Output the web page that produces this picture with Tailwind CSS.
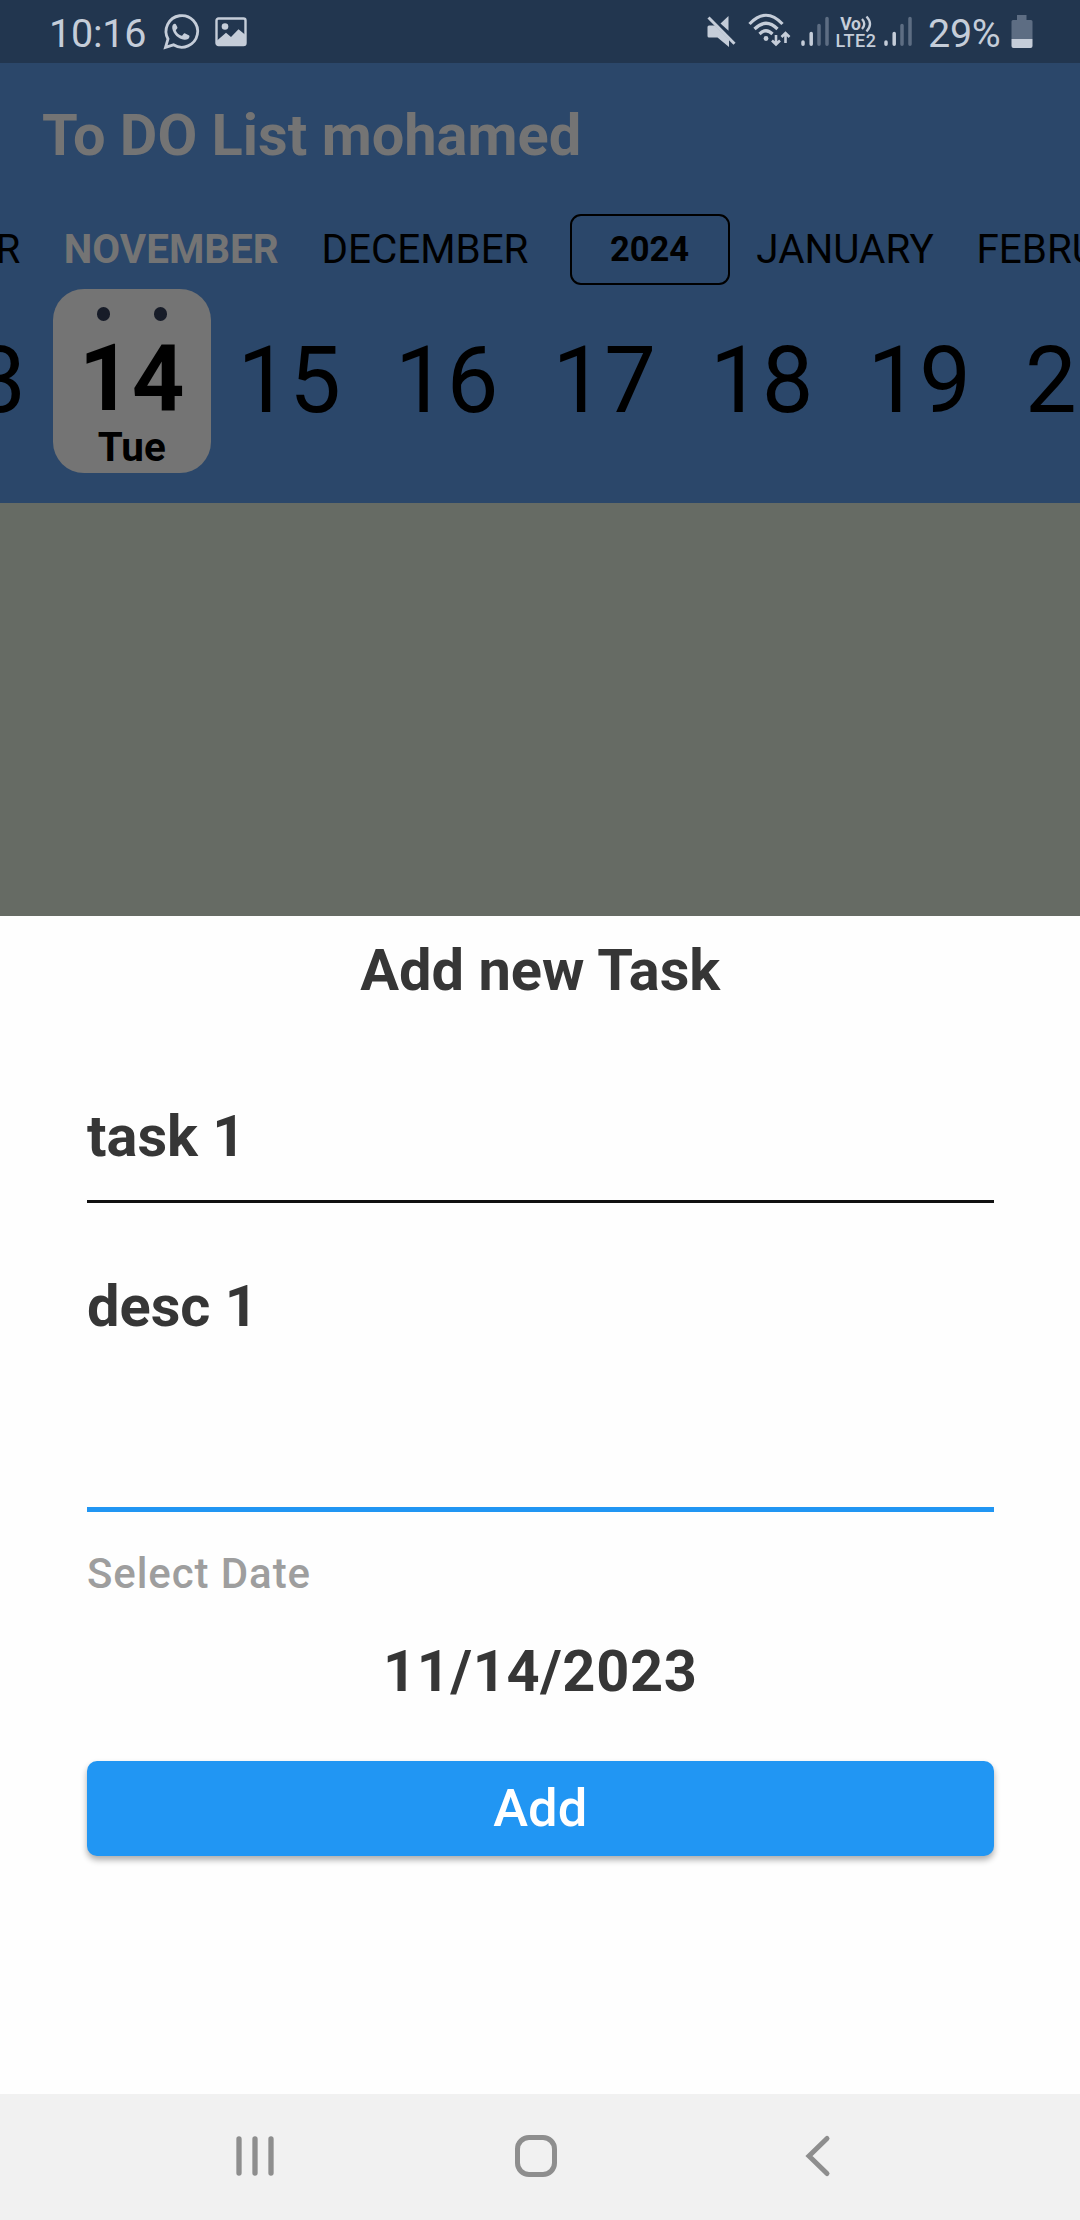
<!DOCTYPE html>
<html lang="en">
<head>
<meta charset="utf-8">
<title>To DO List</title>
<script src="https://cdn.jsdelivr.net/npm/@tailwindcss/browser@4"></script>
</head>
<body class="w-[1080px] h-[2220px] overflow-hidden flex flex-col bg-[#fefefe] font-['Roboto',sans-serif] whitespace-nowrap">
  <!-- Status bar -->
  <div class="h-[63px] shrink-0 bg-[#22364f] text-[#c5cdd9] flex items-start">
    <span class="ml-[49px] mt-[14px] w-[98px] text-[39.5px] leading-[40px] tracking-[-0.2px]">10:16</span>
    <svg class="ml-[14px] mt-[12px] w-[40px] h-[40px] shrink-0" viewBox="0 0 40 40" fill="none">
      <path d="M4.5 35.3 L7 27 A15.8 15.8 0 1 1 12.5 32.8 Z" stroke="#c5cdd9" stroke-width="2.8" stroke-linejoin="miter"/>
      <path d="M13.5 11.8 c-1.6 .3 -2.6 2.4 -2.2 4.8 c1 5.700 6 10.500 12 11.200 c2.500 .3 5 -.9 5.200 -3.200 c.1 -1 -.5 -1.300 -1.300 -1.700 l-3 -1.400 c-.8 -.3 -1.200 -.1 -1.700 .5 l-1.200 1.400 c-.4 .4 -.8 .4 -1.300 .2 c-2.300 -1 -4 -2.700 -5 -4.600 c-.3 -.5 -.2 -.8 .1 -1.200 l1.100 -1.400 c.3 -.4 .3 -.8 .1 -1.300 l-1.300 -2.700 c-.3 -.6 -.7 -.8 -1.500 -.6 z" fill="#c5cdd9"/>
    </svg>
    <svg class="ml-[14px] mt-[16px] w-[32px] h-[31px] shrink-0" viewBox="0 0 32 31">
      <rect x="1.500" y="2.500" width="29" height="26.500" rx="2" fill="none" stroke="#c5cdd9" stroke-width="2.400"/>
      <circle cx="10" cy="10.500" r="3.300" fill="#c5cdd9"/>
      <path d="M1.500 25 L11 16.700 L16 21 L23.500 13.200 L30.500 19 V28 H1.500 Z" fill="#c5cdd9"/>
    </svg>
    <div class="flex-1"></div>
    <svg class="mt-[14px] w-[32px] h-[36px] shrink-0" viewBox="0 0 32 36" fill="#c5cdd9">
      <path d="M1.500 13 Q1.500 11.500 3 11.500 H9 L23 25.500 V33 L11.500 23.500 H3 Q1.500 23.500 1.500 22 Z"/>
      <path d="M14.500 9.500 L22.500 2 V16.800 Z"/>
      <path d="M2.500 3.500 L28.500 29.800" stroke="#c5cdd9" stroke-width="3"/>
    </svg>
    <svg class="ml-[8.5px] mt-[13px] w-[44px] h-[36px] shrink-0" viewBox="0 0 44 36" fill="none" stroke="#c5cdd9" stroke-width="3.200">
      <path d="M2.500 11 Q19 -6.500 35.500 11"/><path d="M7.500 16 Q19 4.500 30.500 16"/><path d="M12.500 21 Q19 14.500 25.500 21"/>
      <circle cx="19" cy="25.500" r="2.400" fill="#c5cdd9" stroke="none"/>
      <path d="M29 22 V31 M25 27.500 L29 31.500 L33 27.500 M38.500 30 V20.500 M34.500 24 L38.500 20 L42.500 24" stroke-width="2.600"/>
    </svg>
    <svg class="ml-[9.5px] mt-[15px] w-[30px] h-[32px] shrink-0" viewBox="0 0 30 32" stroke="#c5cdd9" stroke-width="3.500" stroke-linecap="round">
      <path d="M3 27 V29.200 M11.200 18.500 V29.200"/><path d="M19 10.500 V29.200 M27 3.500 V29.200" stroke="#5d6d83"/>
    </svg>
    <div class="ml-[5px] mt-[16px] w-[42px] flex flex-col items-center">
      <div class="flex items-center h-[16px]"><span class="text-[17.5px] leading-[16px] font-bold tracking-[-0.3px]">Vo</span>
        <svg class="w-[11px] h-[18px] shrink-0" viewBox="0 0 11 18" fill="none" stroke="#c5cdd9" stroke-width="2.300"><path d="M1 4 Q5.500 9 1 14 M5.500 1.500 Q12.500 9 5.500 16.500"/></svg>
      </div>
      <span class="text-[18px] leading-[18px] font-medium tracking-[0.5px]">LTE2</span>
    </div>
    <svg class="ml-[6px] mt-[15px] w-[30px] h-[32px] shrink-0" viewBox="0 0 30 32" stroke="#c5cdd9" stroke-width="3.500" stroke-linecap="round">
      <path d="M3 27 V29.200 M11.200 18.500 V29.200"/><path d="M19 10.500 V29.200 M27 3.500 V29.200" stroke="#5d6d83"/>
    </svg>
    <span class="ml-[15px] mt-[14px] w-[74px] text-[39.500px] leading-[40px] tracking-[-0.3px]">29%</span>
    <svg class="ml-[9px] mr-[47px] mt-[14px] w-[22px] h-[35px] shrink-0" viewBox="0 0 22 35">
      <path d="M6 1 H15.500 V6 H20 Q21.500 6 21.500 7.500 V25 H0.500 V7.500 Q0.500 6 2 6 H6 Z" fill="#5d6d83"/>
      <path d="M0.500 25 H21.500 V32 Q21.500 34 19.500 34 H2.500 Q0.500 34 0.500 32 Z" fill="#c5cdd9"/>
    </svg>
  </div>

  <!-- Header with month and day pickers -->
  <div class="h-[440px] shrink-0 overflow-hidden bg-[#2b476a] flex flex-col">
    <div class="h-[151px] pt-[42px] pl-[42px] text-[57.75px] leading-[60px] font-bold text-[#747474]">To DO List mohamed</div>
    <div class="h-[71px] flex items-center text-[40.4px] leading-[46px] text-black">
      <div class="w-[43px] pr-[22.5px] flex justify-end shrink-0">OCTOBER</div>
      <div class="w-[256.5px] text-center shrink-0 font-bold text-[#747474]">NOVEMBER</div>
      <div class="w-[251px] text-center shrink-0">DECEMBER</div>
      <div class="ml-[19px] w-[160px] h-[71px] shrink-0 rounded-[11px] border-[2.6px] border-black flex items-center justify-center pb-[1px] text-[34.5px] font-bold">2024</div>
      <div class="w-[230px] pl-[1px] text-center shrink-0">JANUARY</div>
      <div class="pl-[17px] shrink-0">FEBRUARY</div>
    </div>
    <div class="mt-[4px] ml-[-104.5px] h-[184px] flex text-[92px] leading-[184px] text-black">
      <div class="w-[157.5px] shrink-0 text-center">13</div>
      <div class="w-[157.5px] shrink-0 h-[184px] rounded-[31px] bg-[#747474] flex flex-col items-center font-bold">
        <div class="mt-[18px] flex gap-[43.5px] h-[14px]"><i class="w-[13.5px] h-[14px] rounded-full bg-[#171c28]"></i><i class="w-[13.5px] h-[14px] rounded-full bg-[#171c28]"></i></div>
        <div class="mt-[8px] h-[99px] leading-[100px]">14</div>
        <div class="h-[40px] text-[40.4px] leading-[40px]">Tue</div>
      </div>
      <div class="w-[157.5px] shrink-0 text-center">15</div>
      <div class="w-[157.5px] shrink-0 text-center">16</div>
      <div class="w-[157.5px] shrink-0 text-center">17</div>
      <div class="w-[157.5px] shrink-0 text-center">18</div>
      <div class="w-[157.5px] shrink-0 text-center">19</div>
      <div class="w-[157.5px] shrink-0 text-center">20</div>
    </div>
  </div>

  <!-- Dimmed task list -->
  <div class="h-[413px] shrink-0 bg-[#666b64]"></div>

  <!-- Bottom sheet -->
  <div class="h-[1178px] shrink-0 bg-[#fefefe] pl-[87px] pr-[86.5px] flex flex-col text-[57.75px] leading-[60px] font-bold text-[#363636]">
    <div class="mt-[24px] text-center">Add new Task</div>
    <div class="mt-[106px] h-[97px] border-b-[3px] border-[#111111]">task 1</div>
    <div class="mt-[73px] h-[236px] border-b-[5px] border-[#2196f3]">desc 1</div>
    <div class="mt-[32px] text-[42px] font-medium tracking-[0.9px] text-[#9e9e9e]">Select Date</div>
    <div class="mt-[37px] text-center tracking-[0.66px]">11/14/2023</div>
    <div class="mt-[60px] h-[95px] rounded-[10px] bg-[#2196f3] shadow-[0_4px_6px_rgba(0,0,0,0.32)] flex items-center justify-center pb-[1px] text-[52.5px] font-medium text-white">Add</div>
  </div>

  <!-- Navigation bar -->
  <div class="h-[126px] shrink-0 bg-[#f1f1f1] flex items-center text-[#8e8e8e]">
    <svg class="ml-[234px] mt-[-2px] w-[42px] h-[44px]" viewBox="0 0 42 44" stroke="currentColor" stroke-width="5.300" stroke-linecap="round"><path d="M5 5 V39 M21 5 V39 M37 5 V39"/></svg>
    <svg class="ml-[238px] mt-[-2px] w-[44px] h-[44px]" viewBox="0 0 44 44" fill="none" stroke="currentColor" stroke-width="5"><rect x="3.500" y="3.500" width="37" height="37" rx="11.500"/></svg>
    <svg class="ml-[246px] mt-[-2px] w-[28px] h-[44px]" viewBox="0 0 28 44" fill="none" stroke="currentColor" stroke-width="5" stroke-linecap="round"><path d="M23 4.500 L5 22 L23 39.500"/></svg>
  </div>
</body>
</html>
